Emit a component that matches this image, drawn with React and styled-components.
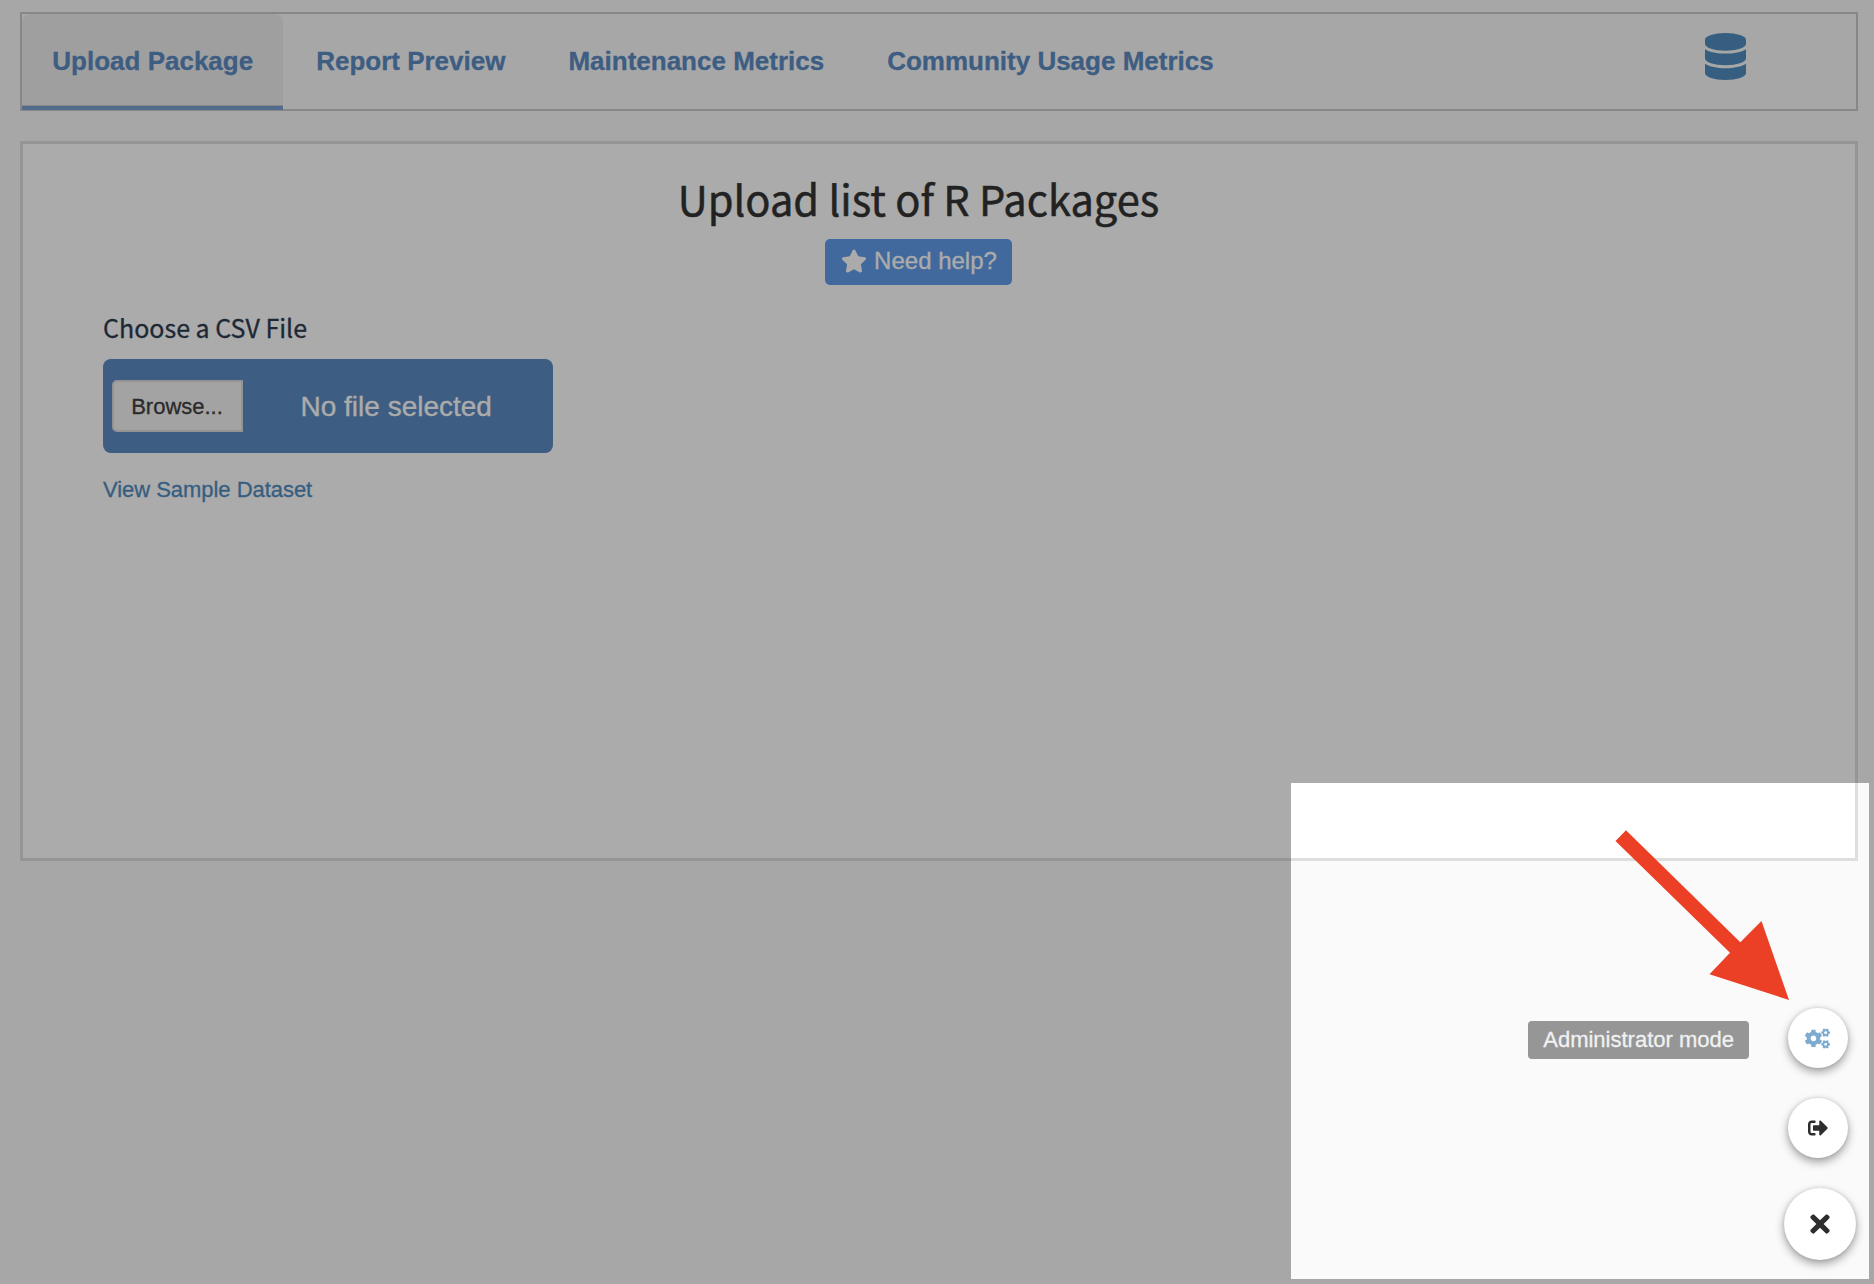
import React from 'react';
import styled, { createGlobalStyle } from 'styled-components';
import { FaDatabase, FaStar, FaCogs, FaSignOutAlt, FaTimes } from 'react-icons/fa';

const sans = '"Liberation Sans", Arial, sans-serif';
const heading = '"Noto Sans CJK SC", "Noto Sans", sans-serif';

const GlobalStyle = createGlobalStyle`
  *, *::before, *::after { box-sizing: border-box; }
  body { margin: 0; background: #fafafa; font-family: ${sans}; -webkit-text-stroke: 0.3px currentColor; }
  button { -webkit-text-stroke: inherit; }
`;

const Page = styled.div`
  position: relative;
  height: 1284px;
  padding: 12px 16px 0 20px;
  overflow: hidden;
  background: #fafafa;
`;

const TabBar = styled.nav`
  display: flex;
  align-items: flex-start;
  gap: 3px;
  height: 99px;
  border: 2px solid #c9c9c9;
`;

const Tab = styled.a`
  height: 96px;
  padding: 32px 29.7px 0 30.3px;
  border-radius: 8px 8px 0 0;
  background: ${(p) => (p.$active ? '#eeeeee' : 'transparent')};
  box-shadow: ${(p) => (p.$active ? 'inset 0 -4px 0 #7aa1cf, inset 0 -5px 0 #c9c9c9' : 'none')};
  border-bottom-left-radius: 0;
  color: #5c8bc2;
  font-size: 26px;
  font-weight: 700;
  line-height: 30px;
  white-space: nowrap;
`;

const DatabaseLink = styled.a`
  display: flex;
  margin: 19px 110px 0 auto;
  color: #518dbf;

  svg { width: 41px; height: 47px; }
`;

const Panel = styled.main`
  display: flex;
  flex-direction: column;
  align-items: flex-start;
  height: 720px;
  margin-top: 30px;
  padding: 31px 121px 0 80px;
  border: 3px solid #dedede;
  background: #fff;
`;

const Intro = styled.header`
  display: flex;
  flex-direction: column;
  align-items: center;
  align-self: stretch;
  gap: 18px;
`;

const Title = styled.h2`
  margin: 0;
  color: #333;
  font: 400 41.6px/46px ${heading};
  -webkit-text-stroke-width: 0.5px;
`;

const HelpButton = styled.button`
  display: flex;
  align-items: center;
  gap: 7.5px;
  height: 46px;
  padding: 0 15px 2px 15.5px;
  border: 0;
  border-radius: 5px;
  background: #619dea;
  color: #fff;
  font: 400 24px/44px ${sans};

  svg { width: 26px; height: 24px; }
`;

const FieldLabel = styled.label`
  margin-top: 27px;
  color: #2e3d50;
  font: 400 25px/30px ${heading};
`;

const FileField = styled.div`
  display: flex;
  align-items: center;
  width: 450px;
  height: 94px;
  margin-top: 17px;
  padding-left: 9px;
  border-radius: 8px;
  background: #5c8bc2;
`;

const BrowseButton = styled.span`
  width: 131px;
  height: 52px;
  padding-right: 1px;
  border: 2px solid #dcdcdc;
  border-radius: 5px 0 0 5px;
  background: #f3f3f3;
  color: #404040;
  font-size: 22px;
  line-height: 49px;
  text-align: center;
`;

const FileName = styled.span`
  flex: 1;
  padding: 2px 0 0 57.5px;
  color: #fff;
  font-size: 28px;
  line-height: 32px;
`;

const SampleLink = styled.a`
  margin-top: 23px;
  color: #518dbf;
  font-size: 22px;
  letter-spacing: -0.04px;
  line-height: 28px;
`;

const Spotlight = styled.div`
  position: absolute;
  top: 783px;
  left: 1291px;
  width: 578px;
  height: 496px;
  box-shadow: 0 0 0 2000px rgba(0, 0, 0, 0.33);
`;

const FloatingMenu = styled.div`
  position: absolute;
  right: 18px;
  bottom: 24px;
  display: flex;
  flex-direction: column;
  align-items: flex-end;
  gap: 30px;
`;

const MenuItem = styled.div`
  display: flex;
  align-items: center;
  gap: 39px;
  margin-right: ${(p) => (p.$main ? '0' : '8px')};
`;

const MenuLabel = styled.span`
  height: 38px;
  margin-top: 4px;
  padding: 0 15px;
  border-radius: 4px;
  background: #969696;
  color: #f1f1f1;
  font-size: 22px;
  line-height: 37px;
`;

const RoundButton = styled.button`
  display: flex;
  align-items: center;
  justify-content: center;
  width: ${(p) => p.$size}px;
  height: ${(p) => p.$size}px;
  padding: 0 1px 0 0;
  border: 0;
  border-radius: 50%;
  background: #fff;
  box-shadow: 0 4px 10px rgba(0, 0, 0, 0.36), 0 0 4px rgba(0, 0, 0, 0.12);
  color: ${(p) => p.$color || '#2d2d2d'};

  svg { width: ${(p) => p.$icon}px; height: ${(p) => p.$icon}px; }
`;

const Arrow = styled.svg`
  position: absolute;
  top: 830px;
  left: 1615px;
  width: 175px;
  height: 171px;
`;

const tabs = ['Upload Package', 'Report Preview', 'Maintenance Metrics', 'Community Usage Metrics'];

export default function App() {
  return (
    <Page>
      <GlobalStyle />
      <TabBar>
        {tabs.map((name, i) => (
          <Tab key={name} $active={i === 0}>{name}</Tab>
        ))}
        <DatabaseLink><FaDatabase preserveAspectRatio="none" /></DatabaseLink>
      </TabBar>

      <Panel>
        <Intro>
          <Title>Upload list of R Packages</Title>
          <HelpButton><FaStar />Need help?</HelpButton>
        </Intro>
        <FieldLabel>Choose a CSV File</FieldLabel>
        <FileField>
          <BrowseButton>Browse...</BrowseButton>
          <FileName>No file selected</FileName>
        </FileField>
        <SampleLink>View Sample Dataset</SampleLink>
      </Panel>

      <Spotlight />

      <FloatingMenu>
        <MenuItem>
          <MenuLabel>Administrator mode</MenuLabel>
          <RoundButton $size={60} $icon={25} $color="#7eabd0"><FaCogs /></RoundButton>
        </MenuItem>
        <MenuItem>
          <RoundButton $size={60} $icon={20}><FaSignOutAlt /></RoundButton>
        </MenuItem>
        <MenuItem $main>
          <RoundButton $size={72} $icon={28}><FaTimes /></RoundButton>
        </MenuItem>
      </FloatingMenu>

      <Arrow viewBox="0 0 175 171">
        <polygon points="11,0.3 0.5,11 115,122.7 94.5,144.3 174,170 146.5,91 125.3,112.3" fill="#eb4025" />
      </Arrow>
    </Page>
  );
}
